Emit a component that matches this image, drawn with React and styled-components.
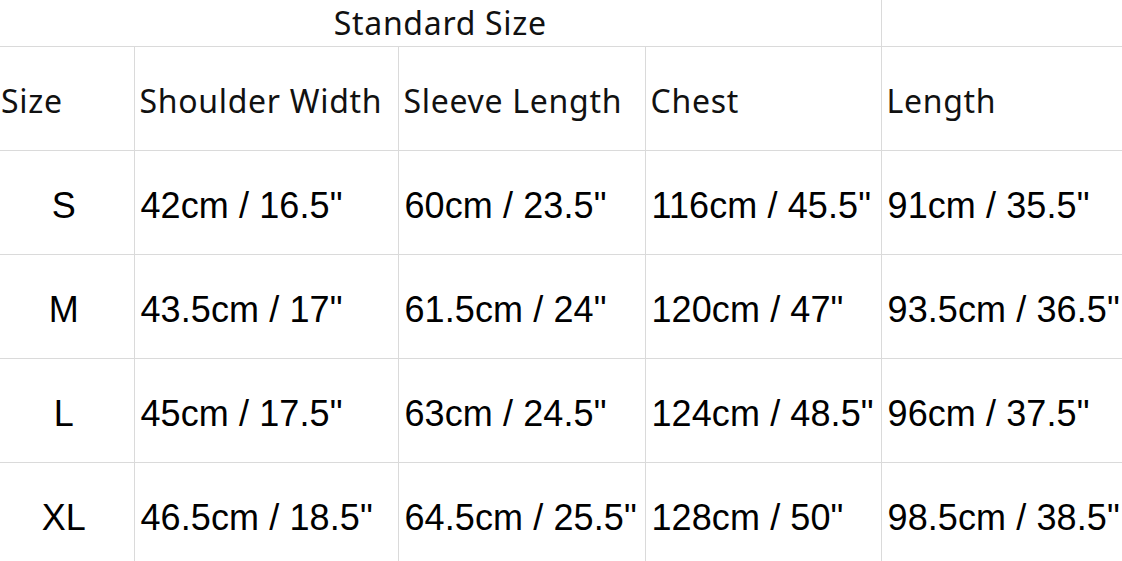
import React from "react";
import styled, { createGlobalStyle } from "styled-components";

const GlobalStyle = createGlobalStyle`
  html, body {
    margin: 0;
    padding: 0;
    background: #fff;
    overflow: hidden;
  }
`;

const rows = [
  ["S", "42cm / 16.5\"", "60cm / 23.5\"", "116cm / 45.5\"", "91cm / 35.5\""],
  ["M", "43.5cm / 17\"", "61.5cm / 24\"", "120cm / 47\"", "93.5cm / 36.5\""],
  ["L", "45cm / 17.5\"", "63cm / 24.5\"", "124cm / 48.5\"", "96cm / 37.5\""],
  ["XL", "46.5cm / 18.5\"", "64.5cm / 25.5\"", "128cm / 50\"", "98.5cm / 38.5\""]
];

const headers = ["Size", "Shoulder Width", "Sleeve Length", "Chest", "Length"];

const Table = styled.table`
  border-collapse: collapse;
  table-layout: fixed;
  width: 1122px;
  color: #000;
  & tr > *:first-child {
    border-left: none;
  }
  & tr > *:last-child {
    border-right: none;
  }
  & thead tr:first-child > * {
    border-top: none;
  }
`;

const Col = styled.col`
  width: ${p => p.$w}px;
`;

const Cell = styled.td`
  border: 1px solid #dadada;
  vertical-align: middle;
  white-space: nowrap;
  overflow: hidden;
  height: ${p => p.$h}px;
  box-sizing: border-box;
  font-family: ${p =>
    p.$num ? "\"Liberation Sans\", Arial, sans-serif" : "\"Noto Sans\", \"Noto Sans CJK SC\", sans-serif"};
  font-size: ${p => (p.$num ? "36px" : "32px")};
  letter-spacing: ${p => (p.$num ? "0.1px" : "0.7px")};
  font-weight: 400;
  color: ${p => (p.$num ? "#000" : "#111")};
  text-align: ${p => (p.$center ? "center" : "left")};
  padding: ${p => (p.$num ? "7px" : "4px")} ${p => (p.$center ? 6 : 0)}px 0
    ${p => (p.$center ? 0 : p.$pl)}px;
`;

const TitleCell = styled(Cell)`
  vertical-align: top;
  padding: 3px 0 0 0;
  line-height: 40px;
`;

export default function App() {
  return (
    <>
      <GlobalStyle />
      <Table>
        <colgroup>
          <Col $w={134} />
          <Col $w={264} />
          <Col $w={247} />
          <Col $w={236} />
          <Col $w={241} />
        </colgroup>
        <thead>
          <tr>
            <TitleCell as="th" colSpan={4} $h={46} $center>
              Standard Size
            </TitleCell>
            <Cell as="th" $h={46} $pl={6} />
          </tr>
          <tr>
            {headers.map((h, i) => (
              <Cell as="th" key={h} $h={104} $pl={i === 0 ? 1 : 5}>
                {h}
              </Cell>
            ))}
          </tr>
        </thead>
        <tbody>
          {rows.map(r => (
            <tr key={r[0]}>
              {r.map((v, i) => (
                <Cell key={i} $h={104} $num $center={i === 0} $pl={6}>
                  {v}
                </Cell>
              ))}
            </tr>
          ))}
        </tbody>
      </Table>
    </>
  );
}
